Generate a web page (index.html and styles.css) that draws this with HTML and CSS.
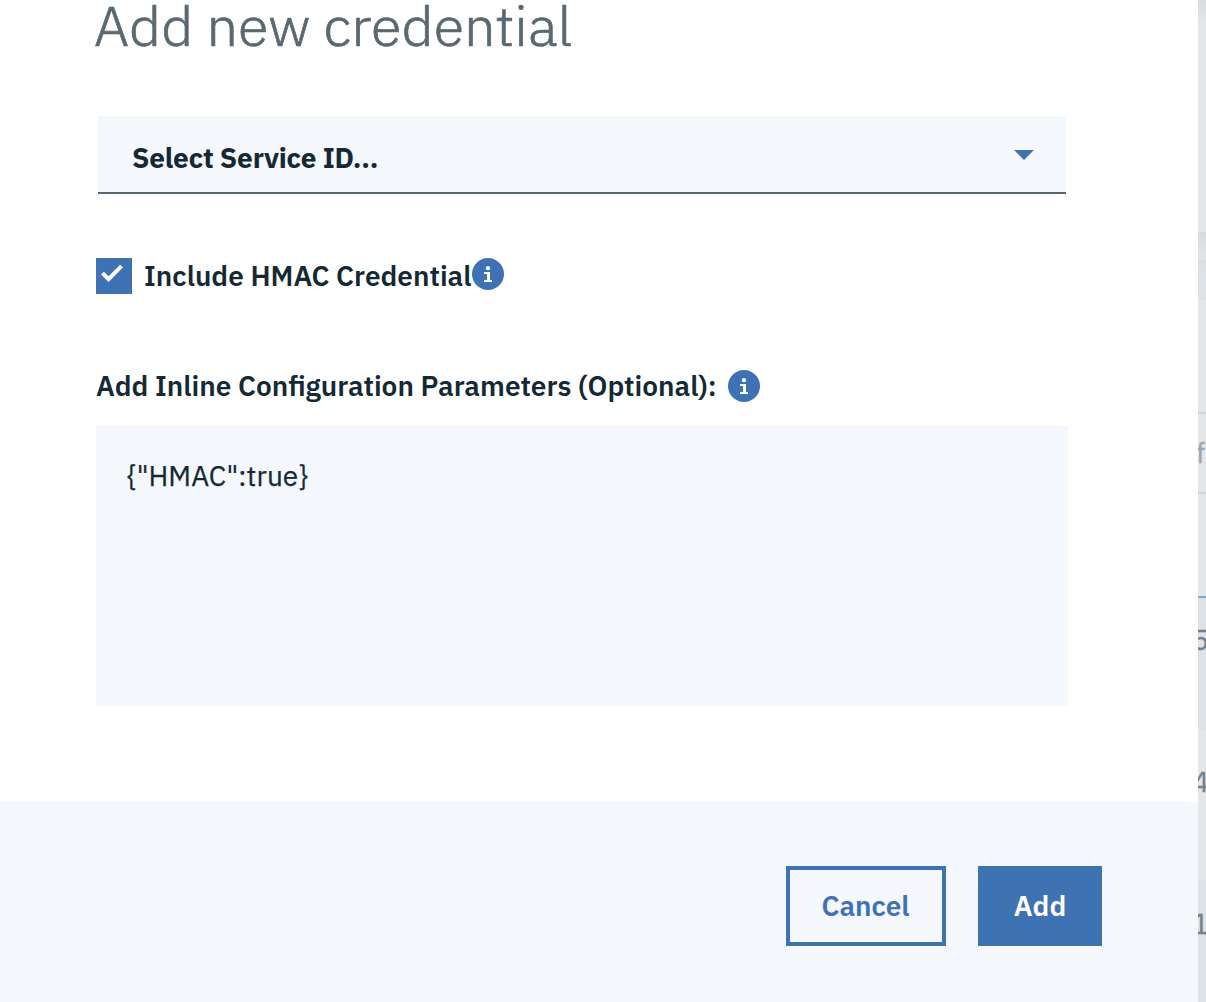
FILE: index.html
```
<!DOCTYPE html>
<html lang="en">
<head>
<meta charset="utf-8">
<title>Add new credential</title>
<link rel="stylesheet" href="styles.css">
</head>
<body>
<div class="page">
  <main class="modal">
    <div class="content">
      <h1 class="title">Add new credential</h1>
      <div class="select">
        <span class="select-text">Select Service ID...</span>
        <svg class="caret" width="20" height="10" viewBox="0 0 20 10"><path d="M0 0h20L10 10z"/></svg>
      </div>
      <div class="check-row">
        <span class="checkbox"><svg width="36" height="36" viewBox="0 0 36 36"><path d="M6.5 15.2L12.5 21.2L25.5 8.2" fill="none" stroke="#fff" stroke-width="4"/></svg></span>
        <label class="check-label">Include HMAC Credential</label>
        <svg class="info" width="32" height="32" viewBox="0 0 32 32"><circle cx="16" cy="16" r="16"/><path class="glyph" d="M12 14h6v8h2v2h-8v-2h3v-6h-3z"/><circle class="glyph" cx="16" cy="10.2" r="2.1"/></svg>
      </div>
      <div class="param-row">
        <label class="param-label">Add Inline Configuration Parameters (Optional):</label>
        <svg class="info" width="32" height="32" viewBox="0 0 32 32"><circle cx="16" cy="16" r="16"/><path class="glyph" d="M12 14h6v8h2v2h-8v-2h3v-6h-3z"/><circle class="glyph" cx="16" cy="10.2" r="2.1"/></svg>
      </div>
      <div class="editor">{"HMAC":true}</div>
    </div>
    <footer class="footer">
      <button class="btn cancel">Cancel</button>
      <button class="btn add">Add</button>
    </footer>
  </main>
  <aside class="backdrop">
    <div class="band top"></div>
    <div class="band shade"></div>
    <div class="band header"></div>
    <div class="band gap"></div>
    <div class="band search"><span class="peek f">f</span></div>
    <div class="band space"></div>
    <div class="band row-a"><span class="peek">5</span></div>
    <div class="band row-b"><span class="peek">4</span></div>
    <div class="band row-c"><span class="peek">1</span></div>
  </aside>
</div>
</body>
</html>
```
FILE: styles.css
```
* { box-sizing: border-box; }
body {
  margin: 0;
  background: #fff;
  color: #152935;
  font-family: "IBM Plex Sans", "Noto Sans", sans-serif;
  font-size: 28px;
}
.page { display: flex; width: 1206px; height: 1002px; overflow: hidden; }
.modal { width: 1198px; display: flex; flex-direction: column; }
.content { height: 802px; padding: 0 130px 0 96px; }
.title {
  height: 116px;
  margin: 0 0 0 -2px;
  font-size: 56px;
  font-weight: 300;
  line-height: 50px;
  color: #5a6872;
  white-space: nowrap;
  -webkit-text-stroke: 0.7px #5a6872;
}
.select {
  display: flex;
  align-items: center;
  justify-content: space-between;
  width: 968px;
  height: 78px;
  margin-left: 2px;
  padding: 6px 32px 0 34px;
  background: #f4f7fc;
  border-bottom: 2px solid #5a6872;
  font-weight: 700;
}
.select-text { letter-spacing: -0.2px; }
.caret { fill: #3f72b3; margin-top: -4px; }
.check-row { display: flex; align-items: center; height: 36px; margin-top: 64px; font-weight: 600; white-space: nowrap; }
.checkbox { width: 36px; height: 36px; background: #3f72b3; }
.check-label { width: 328px; margin: -2px 0 0 12px; }
.check-row .info { margin-top: -4px; }
.info { flex: none; fill: #3f72b3; }
.glyph { fill: #fff; }
.param-row { display: flex; align-items: center; height: 36px; margin-top: 74px; font-weight: 600; white-space: nowrap; }
.param-label { width: 632px; margin-top: -2px; }
.editor { width: 972px; height: 280px; margin-top: 22px; padding: 30px 31px; background: #f4f7fc; line-height: 40px; letter-spacing: 0.08px; -webkit-text-stroke: 0.25px #152935; }
.footer { display: flex; gap: 32px; height: 200px; padding: 64px 96px 0 0; justify-content: flex-end; background: #f4f7fc; }
.btn { height: 80px; padding: 0 0 2px; border: 4px solid #3f72b3; font: inherit; font-weight: 600; }
.cancel { width: 160px; padding-right: 1px; background: transparent; color: #3f72b3; }
.add { width: 124px; background: #3f72b3; color: #fff; }
.backdrop { width: 8px; overflow: hidden; background: #e5e6e8; color: #778087; }
.band { display: flex; align-items: center; justify-content: flex-end; overflow: hidden; }
.top { height: 232px; background: linear-gradient(#d9dadb, #e5e6e8 24px); }
.shade { height: 28px; background: linear-gradient(#d9dadb, #e3e4e6); }
.header { height: 40px; background: linear-gradient(#d5dade, #dde2e6 6px); }
.gap { height: 114px; border-bottom: 2px solid #d3d6d9; }
.search { height: 80px; border-bottom: 2px solid #d3d6d9; }
.space { height: 104px; border-bottom: 2px solid #85a6cd; }
.row-a { height: 132px; background: #dde2e6; align-items: flex-start; padding-top: 22px; }
.row-b { height: 150px; align-items: flex-start; padding-top: 32px; }
.row-c { height: 122px; background: #dde2e6; align-items: flex-start; padding-top: 24px; }
.peek { line-height: 40px; margin-right: -3px; -webkit-text-stroke: 0.3px; }
.f { margin-right: 1px; color: #9fa5aa; }
```
